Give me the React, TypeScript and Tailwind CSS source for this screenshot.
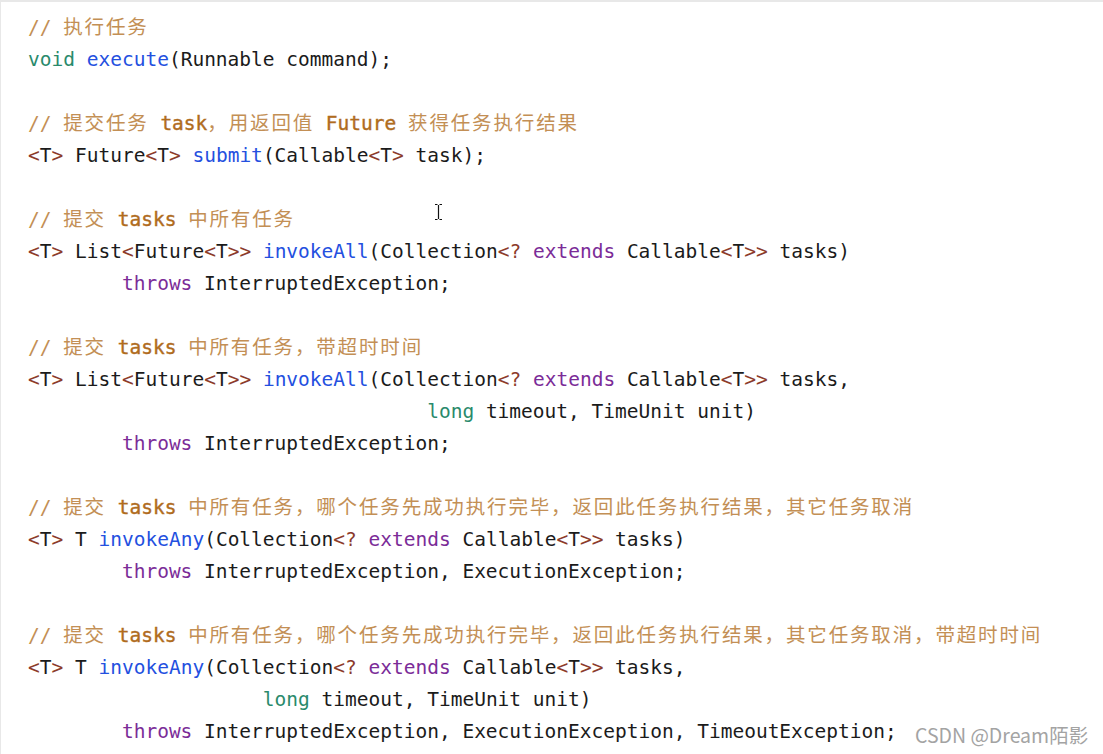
import React from "react";

type Tok = [string, string];

const C = {
  cm: "text-[#c38f55]",
  cw: "text-[#b06c1e] [-webkit-text-stroke:0.4px]",
  kw: "text-[#2a8a6c]",
  fn: "text-[#2450df]",
  pu: "text-[#7b2c98]",
  br: "text-[#8c3b2b]",
  tx: "text-[#1b1b1b]",
};

// comment line: CJK runs get extra spacing so they match the wider glyphs in the shot
const Comment = ({ text }: { text: string }) => {
  const parts = text.split(/([\u3000-\u9fff\uff00-\uffef]+)/).filter(Boolean);
  return (
    <div className="h-[32px]">
      <span className={C.cm}>// </span>
      {parts.map((p, i) =>
        /[\u3000-\u9fff\uff00-\uffef]/.test(p) ? (
          <span key={i} className={`${C.cm} tracking-[1.85px]`}>{p}</span>
        ) : (
          <span key={i} className={C.cw}>{p}</span>
        )
      )}
    </div>
  );
};

const Line = ({ toks }: { toks: Tok[] }) => (
  <div className="h-[32px]">
    {toks.map(([t, c], i) => (
      <span key={i} className={C[c as keyof typeof C]}>{t}</span>
    ))}
  </div>
);

const Blank = () => <div className="h-[32px]" />;

const T: Tok[] = [["<", "br"], ["T", "tx"], ["> ", "br"]];
const callable: Tok[] = [
  ["Collection", "tx"], ["<? ", "br"], ["extends", "pu"], [" Callable", "tx"],
  ["<", "br"], ["T", "tx"], [">>", "br"],
];

export default function App() {
  return (
    <div className="relative w-[1103px] h-[754px] overflow-hidden bg-white border-t-2 border-l border-[#e8e8e8]">
      <div className="pt-[10px] pl-[27px] whitespace-pre text-[19.5px] leading-[32px] font-['DejaVu_Sans_Mono','Noto_Sans_CJK_SC',monospace]">
        <Comment text="执行任务" />
        <Line toks={[["void", "kw"], [" ", "tx"], ["execute", "fn"], ["(Runnable command);", "tx"]]} />
        <Blank />
        <Comment text="提交任务 task，用返回值 Future 获得任务执行结果" />
        <Line
          toks={[
            ...T, ["Future", "tx"], ["<", "br"], ["T", "tx"], ["> ", "br"],
            ["submit", "fn"], ["(Callable", "tx"], ["<", "br"], ["T", "tx"], [">", "br"], [" task);", "tx"],
          ]}
        />
        <Blank />
        <Comment text="提交 tasks 中所有任务" />
        <Line
          toks={[
            ...T, ["List", "tx"], ["<", "br"], ["Future", "tx"], ["<", "br"], ["T", "tx"], [">> ", "br"],
            ["invokeAll", "fn"], ["(", "tx"], ...callable, [" tasks)", "tx"],
          ]}
        />
        <Line toks={[["        ", "tx"], ["throws", "pu"], [" InterruptedException;", "tx"]]} />
        <Blank />
        <Comment text="提交 tasks 中所有任务，带超时时间" />
        <Line
          toks={[
            ...T, ["List", "tx"], ["<", "br"], ["Future", "tx"], ["<", "br"], ["T", "tx"], [">> ", "br"],
            ["invokeAll", "fn"], ["(", "tx"], ...callable, [" tasks,", "tx"],
          ]}
        />
        <Line toks={[["                                  ", "tx"], ["long", "kw"], [" timeout, TimeUnit unit)", "tx"]]} />
        <Line toks={[["        ", "tx"], ["throws", "pu"], [" InterruptedException;", "tx"]]} />
        <Blank />
        <Comment text="提交 tasks 中所有任务，哪个任务先成功执行完毕，返回此任务执行结果，其它任务取消" />
        <Line toks={[...T, ["T ", "tx"], ["invokeAny", "fn"], ["(", "tx"], ...callable, [" tasks)", "tx"]]} />
        <Line toks={[["        ", "tx"], ["throws", "pu"], [" InterruptedException, ExecutionException;", "tx"]]} />
        <Blank />
        <Comment text="提交 tasks 中所有任务，哪个任务先成功执行完毕，返回此任务执行结果，其它任务取消，带超时时间" />
        <Line toks={[...T, ["T ", "tx"], ["invokeAny", "fn"], ["(", "tx"], ...callable, [" tasks,", "tx"]]} />
        <Line toks={[["                    ", "tx"], ["long", "kw"], [" timeout, TimeUnit unit)", "tx"]]} />
        <Line
          toks={[["        ", "tx"], ["throws", "pu"], [" InterruptedException, ExecutionException, TimeoutException;", "tx"]]}
        />
      </div>

      {/* text cursor */}
      <svg className="absolute left-[433px] top-[201px]" width="9" height="18" viewBox="0 0 9 18">
        <path d="M1 1.5h2.5M5.5 1.5H8M4.5 2v14M1 16.5h2.5M5.5 16.5H8" stroke="#111" strokeWidth="1.2" fill="none" />
      </svg>

      {/* watermark */}
      <div className="absolute left-[914px] top-[720px] text-[19.5px] leading-[26px] text-[#a3a3a3] font-['Noto_Sans_CJK_SC',sans-serif] [text-shadow:0_0_2px_#fff]">
        CSDN @Dream陌影
      </div>
    </div>
  );
}
